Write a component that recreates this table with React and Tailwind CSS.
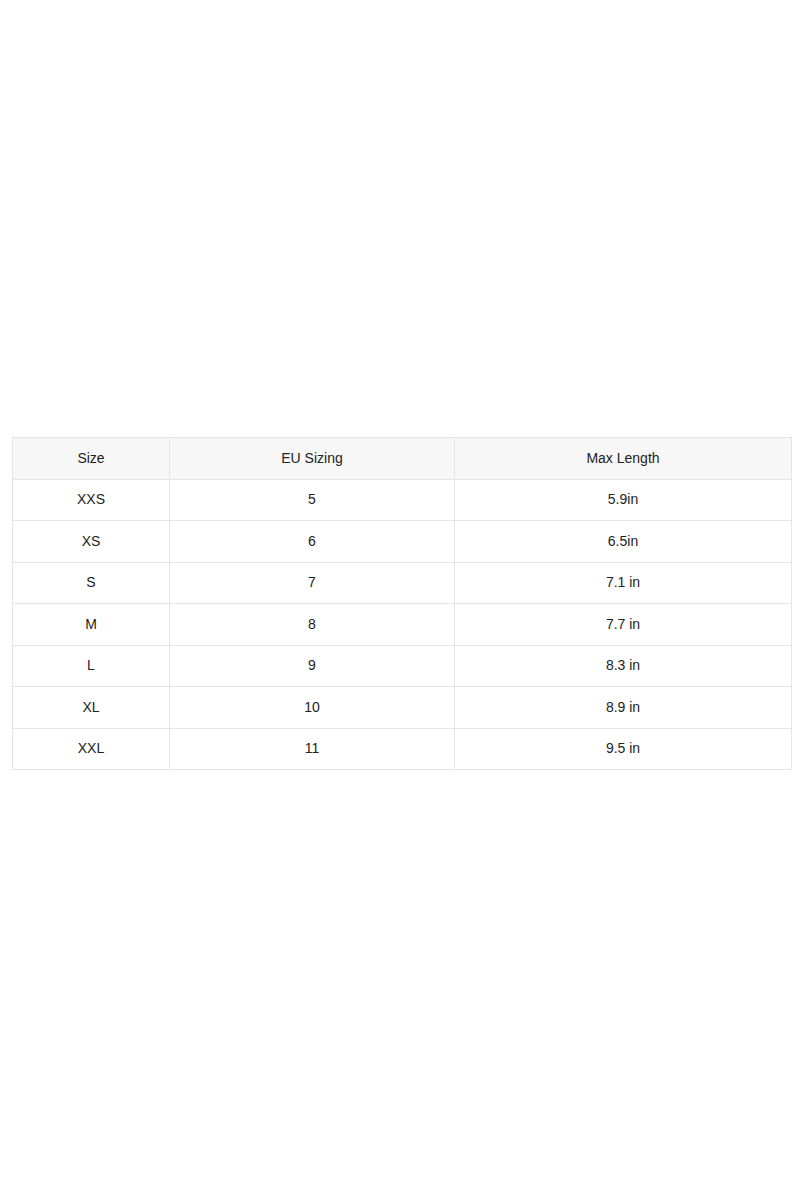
const rows = [
  ['XXS', '5', '5.9in'],
  ['XS', '6', '6.5in'],
  ['S', '7', '7.1 in'],
  ['M', '8', '7.7 in'],
  ['L', '9', '8.3 in'],
  ['XL', '10', '8.9 in'],
  ['XXL', '11', '9.5 in'],
];

export default function App() {
  return (
    <div className="w-[800px] h-[1200px] bg-white pt-[437px] pl-[12px] font-['Liberation_Sans',Arial,sans-serif] text-[14px] text-[#222]">
      <table className="w-[779px] border-collapse table-fixed">
        <colgroup>
          <col className="w-[157px]" />
          <col className="w-[285px]" />
          <col className="w-[337px]" />
        </colgroup>
        <thead>
          <tr className="h-[41.5px] bg-[#f7f7f7]">
            <th className="border border-[#e4e4e4] font-normal">Size</th>
            <th className="border border-[#e4e4e4] font-normal">EU Sizing</th>
            <th className="border border-[#e4e4e4] font-normal">Max Length</th>
          </tr>
        </thead>
        <tbody>
          {rows.map((r) => (
            <tr key={r[0]} className="h-[41.5px]">
              {r.map((c, i) => (
                <td key={i} className="border border-[#e4e4e4] text-center">
                  {c}
                </td>
              ))}
            </tr>
          ))}
        </tbody>
      </table>
    </div>
  );
}
